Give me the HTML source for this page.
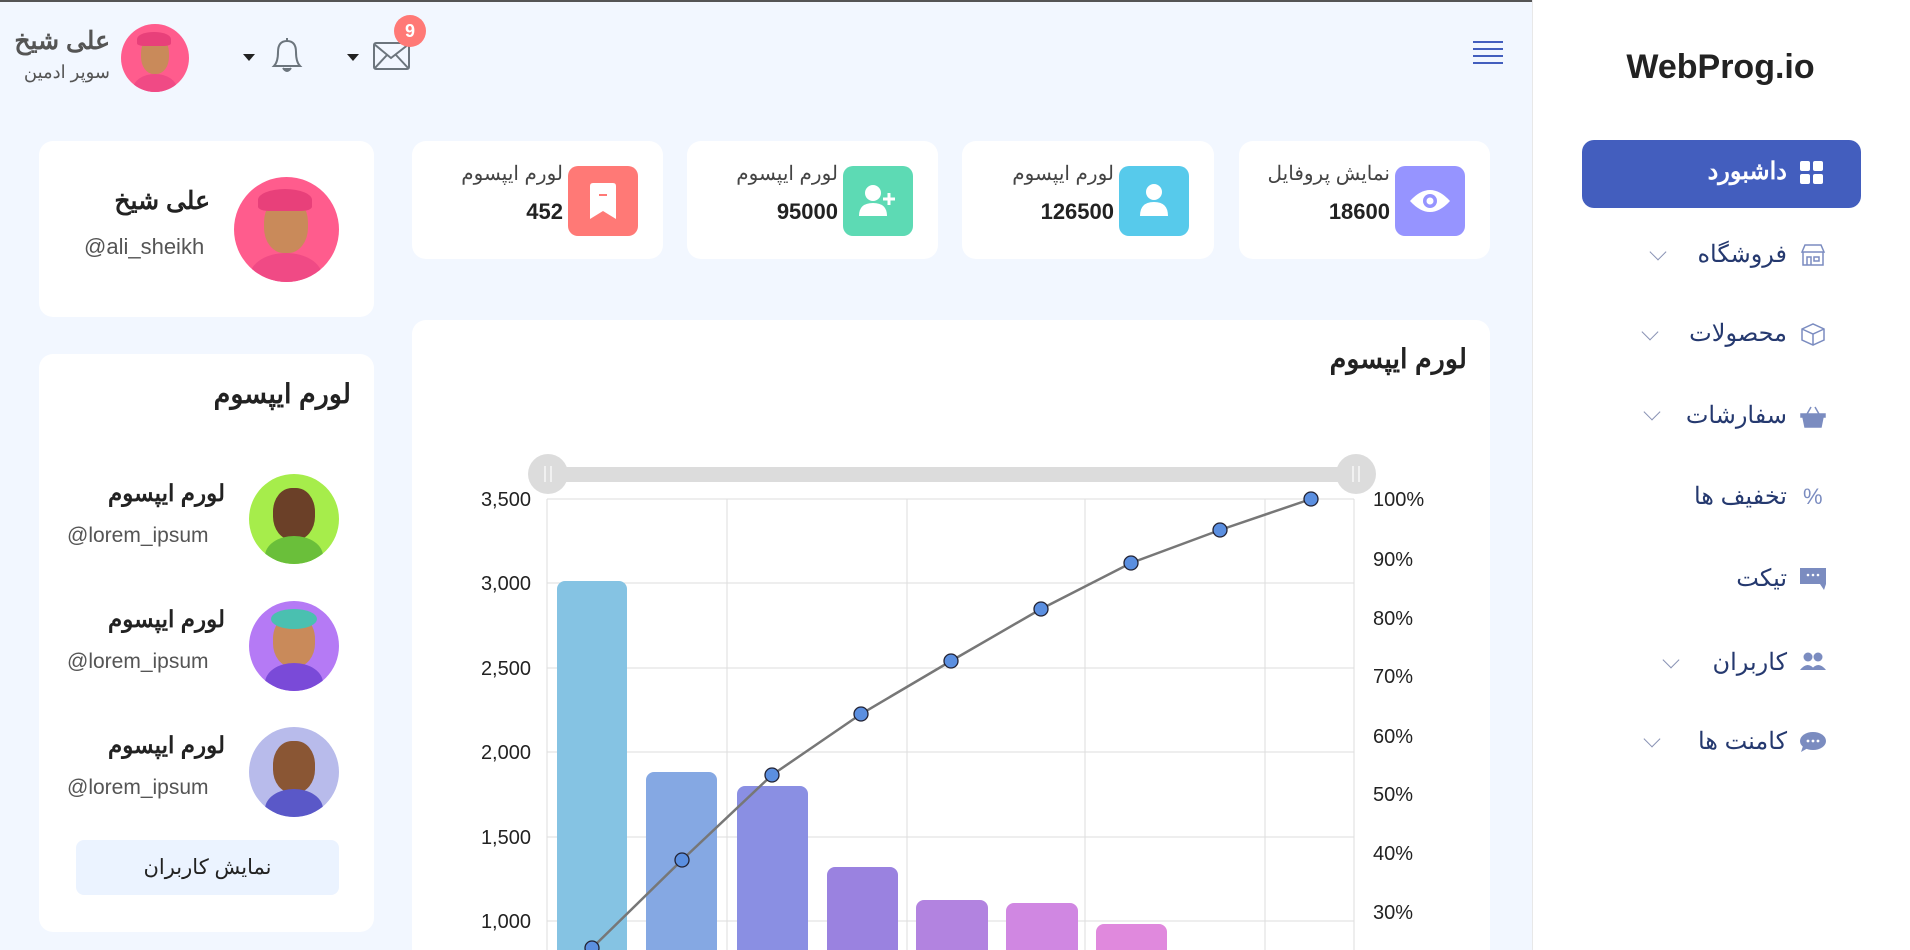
<!DOCTYPE html>
<html><head><meta charset="utf-8"><style>
*{margin:0;padding:0;box-sizing:border-box}
html,body{width:1910px;height:950px;overflow:hidden}
body{background:#f2f7ff;font-family:"Liberation Sans","Noto Sans CJK SC",sans-serif;position:relative;color:#25396f}
.a{position:absolute}
.card{position:absolute;background:#fff;border-radius:14px}
.r{direction:rtl;text-align:right;white-space:nowrap}
.side{position:absolute;left:1532px;top:0;width:378px;height:950px;background:#fff;border-left:1px solid #e8e8e8}
.mi{position:absolute;right:123px;font-size:24px;color:#25396f;direction:rtl;white-space:nowrap}
.chev{position:absolute;width:12px;height:12px;border-right:1.5px solid #8a93b5;border-bottom:1.5px solid #8a93b5;transform:rotate(45deg)}
.sc-l{font-size:20px;color:#444;position:absolute;right:100px;top:20px}
.sc-n{font-size:22px;font-weight:bold;color:#222;position:absolute;right:100px;top:58px}
.sbox{position:absolute;right:25px;top:25px;width:70px;height:70px;border-radius:10px}
.face{position:absolute;border-radius:50%;overflow:hidden}
</style></head><body>
<div style="position:absolute;left:0;top:0;width:1910px;height:2px;background:#555"></div>
<div class="side">
 <div class="a" style="left:0;width:375px;top:48px;text-align:center;font-size:34px;font-weight:bold;color:#222">WebProg.io</div>
 <div class="a" style="left:49px;top:140px;width:279px;height:68px;background:#435ebe;border-radius:12px"></div>
</div>
<div class="mi" style="top:157px;color:#fff;font-weight:bold;right:123px">داشبورد</div>
<svg class="a" style="left:1800px;top:161px" width="24" height="24"><rect x="0" y="0" width="10" height="10" rx="2" fill="#fff"/><rect x="13" y="0" width="10" height="10" rx="2" fill="#fff"/><rect x="0" y="13" width="10" height="10" rx="2" fill="#fff"/><rect x="13" y="13" width="10" height="10" rx="2" fill="#fff"/></svg>
<div class="mi" style="top:240px">فروشگاه</div>
<svg class="a" style="left:1800px;top:243px" width="26" height="24" fill="none" stroke="#7b8cc0" stroke-width="1.5"><path d="M2 9 L5 2 H21 L24 9 Z M3 9 V22 H23 V9 M7 14 h4 v8 h-4z M14 14 h5 v4 h-5z"/></svg>
<div class="chev" style="left:1652px;top:246px"></div>
<div class="mi" style="top:319px">محصولات</div>
<svg class="a" style="left:1800px;top:322px" width="26" height="24" fill="none" stroke="#7b8cc0" stroke-width="1.5"><path d="M2 7 L13 2 L24 7 V18 L13 23 L2 18 Z M2 7 L13 12 L24 7 M13 12 V23"/></svg>
<div class="chev" style="left:1644px;top:326px"></div>
<div class="mi" style="top:401px">سفارشات</div>
<svg class="a" style="left:1800px;top:406px" width="26" height="22" fill="#7b8cc0"><path d="M1 8 H25 V11 H1Z M3 11 H23 L21 21 H5Z M7 8 L11 1 M19 8 L15 1" stroke="#7b8cc0" stroke-width="1.5"/></svg>
<div class="chev" style="left:1646px;top:406px"></div>
<div class="mi" style="top:482px">تخفیف ها</div>
<div class="a" style="left:1803px;top:484px;font-size:22px;color:#7b8cc0">%</div>
<div class="mi" style="top:564px">تیکت</div>
<svg class="a" style="left:1800px;top:568px" width="26" height="24"><path d="M0 0 H26 V16 L24 22 L20 16 H0Z" fill="#7b8cc0"/><circle cx="8" cy="7" r="1.3" fill="#fff"/><circle cx="13" cy="7" r="1.3" fill="#fff"/><circle cx="18" cy="7" r="1.3" fill="#fff"/></svg>
<div class="mi" style="top:648px">کاربران</div>
<svg class="a" style="left:1800px;top:652px" width="26" height="20" fill="#7b8cc0"><circle cx="8" cy="5" r="4.5"/><circle cx="18" cy="5" r="4.5"/><path d="M0 18 Q8 8 15 18Z M11 18 Q18 8 26 18Z"/></svg>
<div class="chev" style="left:1665px;top:654px"></div>
<div class="mi" style="top:727px">کامنت ها</div>
<svg class="a" style="left:1800px;top:731px" width="26" height="22"><ellipse cx="13" cy="10" rx="13" ry="9" fill="#7b8cc0"/><path d="M3 15 L1 21 L8 17Z" fill="#7b8cc0"/><circle cx="8" cy="10" r="1.4" fill="#fff"/><circle cx="13" cy="10" r="1.4" fill="#fff"/><circle cx="18" cy="10" r="1.4" fill="#fff"/></svg>
<div class="chev" style="left:1646px;top:733px"></div>

<svg class="a" style="left:1473px;top:40px" width="30" height="26" stroke="#435ebe" stroke-width="2"><path d="M0 2H30M0 9H30M0 16H30M0 23H30"/></svg>
<div class="face" style="left:121px;top:24px;width:68px;height:68px;background:#ff5c8d"><div class="a" style="left:20px;top:12px;width:28px;height:38px;border-radius:45%;background:#c98a5a"></div><div class="a" style="left:16px;top:8px;width:34px;height:14px;border-radius:50% 50% 20% 20%;background:#e8407a"></div><div class="a" style="left:12px;top:50px;width:44px;height:30px;border-radius:50%;background:#f04a85"></div></div>
<div class="a r" style="right:1800px;top:26px;font-size:25px;font-weight:bold;color:#555">علی شیخ</div>
<div class="a r" style="right:1800px;top:62px;font-size:18px;color:#555">سوپر ادمین</div>
<div class="a" style="left:243px;top:54px;border-left:6px solid transparent;border-right:6px solid transparent;border-top:7px solid #222"></div>
<svg class="a" style="left:270px;top:36px" width="34" height="38" fill="none" stroke="#6c757d" stroke-width="2"><path d="M4 30 Q8 26 8 16 Q8 5 17 5 Q26 5 26 16 Q26 26 30 30 Z M17 2 V5"/><path d="M13 32 Q17 38 21 32" fill="#6c757d"/></svg>
<div class="a" style="left:347px;top:54px;border-left:6px solid transparent;border-right:6px solid transparent;border-top:7px solid #222"></div>
<svg class="a" style="left:373px;top:42px" width="38" height="28" fill="none" stroke="#6c757d" stroke-width="2"><rect x="1" y="1" width="35" height="26" rx="2"/><path d="M1 2 L18 16 L36 2 M1 27 L14 13 M36 27 L23 13"/></svg>
<div class="a" style="left:394px;top:15px;width:32px;height:32px;border-radius:50%;background:#ff7976;color:#fff;font-weight:bold;font-size:18px;text-align:center;line-height:32px">9</div>

<div class="card" style="left:412px;top:141px;width:251px;height:118px"><div class="sc-l r">لورم ایپسوم</div><div class="sc-n">452</div><div class="sbox" style="background:#ff7976"><svg style="position:absolute;left:22px;top:17px" width="26" height="36"><path d="M0 3 Q0 0 3 0 H23 Q26 0 26 3 V36 L13 28 L0 36Z" fill="#fff"/><path d="M9 12 H17" stroke="#ff7976" stroke-width="2"/></svg></div></div>
<div class="card" style="left:687px;top:141px;width:251px;height:118px"><div class="sc-l r">لورم ایپسوم</div><div class="sc-n">95000</div><div class="sbox" style="background:#5ddab4"><svg style="position:absolute;left:16px;top:18px" width="40" height="32" fill="#fff"><circle cx="14" cy="9" r="8"/><path d="M0 32 Q0 19 14 19 Q28 19 28 32Z"/><path d="M30 9 V21 M24 15 H36" stroke="#fff" stroke-width="3"/></svg></div></div>
<div class="card" style="left:962px;top:141px;width:252px;height:118px"><div class="sc-l r">لورم ایپسوم</div><div class="sc-n">126500</div><div class="sbox" style="background:#57caeb"><svg style="position:absolute;left:21px;top:18px" width="28" height="32" fill="#fff"><circle cx="14" cy="8" r="8"/><path d="M0 32 Q0 18 14 18 Q28 18 28 32Z"/></svg></div></div>
<div class="card" style="left:1239px;top:141px;width:251px;height:118px"><div class="sc-l r">نمایش پروفایل</div><div class="sc-n">18600</div><div class="sbox" style="background:#9694ff"><svg style="position:absolute;left:13px;top:21px" width="44" height="28"><path d="M2 14 Q22 -8 42 14 Q22 36 2 14Z" fill="#fff"/><circle cx="22" cy="14" r="7" fill="#9694ff"/><circle cx="22" cy="14" r="3.5" fill="#fff"/></svg></div></div>

<div class="card" style="left:39px;top:141px;width:335px;height:176px"></div>
<div class="face" style="left:234px;top:177px;width:105px;height:105px;background:#ff5c8d"><div class="a" style="left:30px;top:20px;width:44px;height:56px;border-radius:45%;background:#c98a5a"></div><div class="a" style="left:24px;top:12px;width:54px;height:22px;border-radius:50% 50% 20% 20%;background:#e8407a"></div><div class="a" style="left:16px;top:76px;width:72px;height:46px;border-radius:50%;background:#f04a85"></div></div>
<div class="a r" style="right:1700px;top:186px;font-size:25px;font-weight:bold;color:#222">علی شیخ</div>
<div class="a" style="left:84px;top:234px;font-size:22px;color:#555">@ali_sheikh</div>

<div class="card" style="left:39px;top:354px;width:335px;height:578px"></div>
<div class="a r" style="right:1559px;top:379px;font-size:27px;font-weight:bold;color:#222">لورم ایپسوم</div>
<div class="face" style="left:249px;top:474px;width:90px;height:90px;background:#a6ed4b"><div class="a" style="left:24px;top:14px;width:42px;height:52px;border-radius:45%;background:#6b4028"></div><div class="a" style="left:16px;top:62px;width:58px;height:40px;border-radius:50%;background:#6abf3a"></div></div>
<div class="face" style="left:249px;top:601px;width:90px;height:90px;background:#b57af5"><div class="a" style="left:24px;top:14px;width:42px;height:52px;border-radius:45%;background:#c98a5a"></div><div class="a" style="left:22px;top:8px;width:46px;height:20px;border-radius:50%;background:#4ac0b0"></div><div class="a" style="left:16px;top:62px;width:58px;height:40px;border-radius:50%;background:#7a4ad8"></div></div>
<div class="face" style="left:249px;top:727px;width:90px;height:90px;background:#b8bbeb"><div class="a" style="left:24px;top:14px;width:42px;height:52px;border-radius:45%;background:#8a5634"></div><div class="a" style="left:16px;top:62px;width:58px;height:40px;border-radius:50%;background:#5a58c8"></div></div>
<div class="a r" style="right:1685px;top:480px;font-size:23px;font-weight:bold;color:#222">لورم ایپسوم</div>
<div class="a" style="left:67px;top:524px;font-size:21px;color:#555">@lorem_ipsum</div>
<div class="a r" style="right:1685px;top:606px;font-size:23px;font-weight:bold;color:#222">لورم ایپسوم</div>
<div class="a" style="left:67px;top:650px;font-size:21px;color:#555">@lorem_ipsum</div>
<div class="a r" style="right:1685px;top:732px;font-size:23px;font-weight:bold;color:#222">لورم ایپسوم</div>
<div class="a" style="left:67px;top:776px;font-size:21px;color:#555">@lorem_ipsum</div>
<div class="a" style="left:76px;top:840px;width:263px;height:55px;border-radius:8px;background:#ebf3ff;text-align:center;line-height:55px;font-size:21px;color:#222;direction:rtl">نمایش کاربران</div>

<div class="card" style="left:412px;top:320px;width:1078px;height:630px;border-radius:14px 14px 0 0"></div>
<div class="a r" style="right:443px;top:344px;font-size:27px;font-weight:bold;color:#222">لورم ایپسوم</div>
<svg class="a" style="left:0;top:0" width="1910" height="950" font-family="Liberation Sans, sans-serif" font-size="20">
 <rect x="548" y="467" width="808" height="15" fill="#dcdcdc"/>
 <circle cx="548" cy="474" r="20" fill="#dcdcdc"/><circle cx="1356" cy="474" r="20" fill="#dcdcdc"/>
 <path d="M545 466v16M551 466v16M1353 466v16M1359 466v16" stroke="#fff" stroke-width="1.2"/>
 <g stroke="#dedede" stroke-width="1">
  <path d="M547 499H1354M547 583H1354M547 668H1354M547 752H1354M547 837H1354M547 921H1354"/>
  <path d="M547 499V950M727 499V950M907 499V950M1085 499V950M1265 499V950M1354 499V950"/>
 </g>
 <g fill="#222" text-anchor="end">
  <text x="531" y="506">3,500</text><text x="531" y="590">3,000</text><text x="531" y="675">2,500</text><text x="531" y="759">2,000</text><text x="531" y="844">1,500</text><text x="531" y="928">1,000</text>
 </g>
 <g fill="#222">
  <text x="1373" y="506">100%</text><text x="1373" y="566">90%</text><text x="1373" y="625">80%</text><text x="1373" y="683">70%</text><text x="1373" y="743">60%</text><text x="1373" y="801">50%</text><text x="1373" y="860">40%</text><text x="1373" y="919">30%</text>
 </g>
 <rect x="557" y="581" width="70" height="400" rx="8" fill="#85c3e3"/>
 <rect x="646" y="772" width="71" height="400" rx="8" fill="#85a8e3"/>
 <rect x="737" y="786" width="71" height="400" rx="8" fill="#8a8fe3"/>
 <rect x="827" y="867" width="71" height="400" rx="8" fill="#9a82e0"/>
 <rect x="916" y="900" width="72" height="400" rx="8" fill="#b283e0"/>
 <rect x="1006" y="903" width="72" height="400" rx="8" fill="#d087e2"/>
 <rect x="1096" y="924" width="71" height="400" rx="8" fill="#e089dd"/>
 <polyline points="592,948 682,860 772,775 861,714 951,661 1041,609 1131,563 1220,530 1311,499" fill="none" stroke="#777" stroke-width="2.5"/>
 <g fill="#5b8fe0" stroke="#223" stroke-width="1.3">
  <circle cx="592" cy="948" r="7"/><circle cx="682" cy="860" r="7"/><circle cx="772" cy="775" r="7"/><circle cx="861" cy="714" r="7"/><circle cx="951" cy="661" r="7"/><circle cx="1041" cy="609" r="7"/><circle cx="1131" cy="563" r="7"/><circle cx="1220" cy="530" r="7"/><circle cx="1311" cy="499" r="7"/>
 </g>
</svg>
</body></html>
